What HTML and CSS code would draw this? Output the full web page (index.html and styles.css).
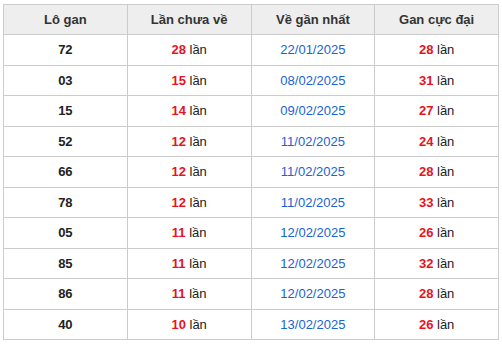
FILE: index.html
```html
<!DOCTYPE html>
<html lang="vi">
<head>
<meta charset="utf-8">
<link rel="stylesheet" href="styles.css">
</head>
<body>
<table class="gan">
<thead>
<tr><th>Lô gan</th><th>Lần chưa về</th><th>Về gần nhất</th><th>Gan cực đại</th></tr>
</thead>
<tbody>
<tr><td class="num">72</td><td><b class="red">28</b> lần</td><td class="date">22/01/2025</td><td><b class="red">28</b> lần</td></tr>
<tr><td class="num">03</td><td><b class="red">15</b> lần</td><td class="date">08/02/2025</td><td><b class="red">31</b> lần</td></tr>
<tr><td class="num">15</td><td><b class="red">14</b> lần</td><td class="date">09/02/2025</td><td><b class="red">27</b> lần</td></tr>
<tr><td class="num">52</td><td><b class="red">12</b> lần</td><td class="date">11/02/2025</td><td><b class="red">24</b> lần</td></tr>
<tr><td class="num">66</td><td><b class="red">12</b> lần</td><td class="date">11/02/2025</td><td><b class="red">28</b> lần</td></tr>
<tr><td class="num">78</td><td><b class="red">12</b> lần</td><td class="date">11/02/2025</td><td><b class="red">33</b> lần</td></tr>
<tr><td class="num">05</td><td><b class="red">11</b> lần</td><td class="date">12/02/2025</td><td><b class="red">26</b> lần</td></tr>
<tr><td class="num">85</td><td><b class="red">11</b> lần</td><td class="date">12/02/2025</td><td><b class="red">32</b> lần</td></tr>
<tr><td class="num">86</td><td><b class="red">11</b> lần</td><td class="date">12/02/2025</td><td><b class="red">28</b> lần</td></tr>
<tr><td class="num">40</td><td><b class="red">10</b> lần</td><td class="date">13/02/2025</td><td><b class="red">26</b> lần</td></tr>
</tbody>
</table>
</body>
</html>
```
FILE: styles.css
```css
html, body {
  margin: 0;
  padding: 0;
  background: #fff;
}
body {
  padding: 4px 3px 0 3px;
  font-family: "Liberation Sans", Arial, sans-serif;
  font-size: 13px;
  color: #222;
}
.gan {
  width: 496px;
  border-collapse: collapse;
  table-layout: fixed;
}
.gan th, .gan td {
  border: 1px solid #ccc;
  text-align: center;
  padding: 0;
}
.gan th {
  background: #eee;
  height: 29px;
  font-weight: bold;
  color: #333;
}
.gan td {
  height: 29.5px;
}
.num {
  font-weight: bold;
}
.red {
  color: #e8121e;
}
.date {
  color: #1a63d0;
}
```
